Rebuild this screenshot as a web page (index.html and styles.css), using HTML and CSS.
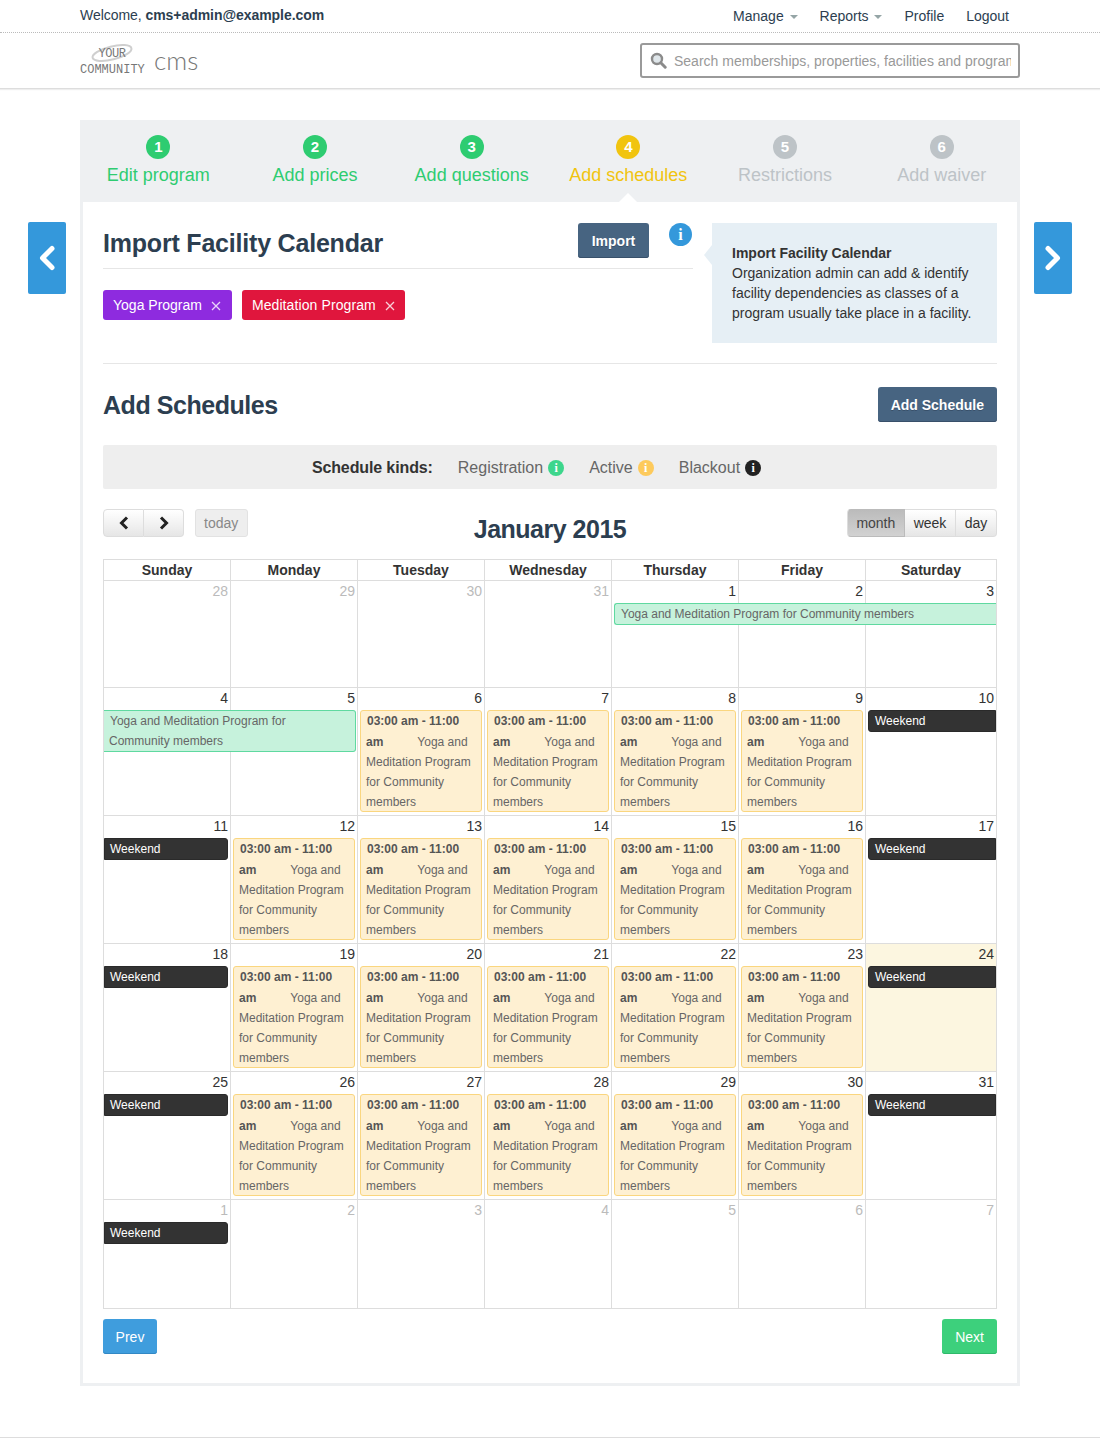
FILE: index.html
```html
<!DOCTYPE html>
<html>
<head>
<meta charset="utf-8">
<title>Add schedules</title>
<link rel="stylesheet" href="styles.css">
</head>
<body>
<div class="topbar">
	<div class="wrap topbar-in">
		<div class="welcome">Welcome, <b>cms+admin@example.com</b></div>
		<ul class="nav">
			<li>Manage <i class="caret"></i></li>
			<li>Reports <i class="caret"></i></li>
			<li>Profile</li>
			<li>Logout</li>
		</ul>
	</div>
</div>
<div class="header">
	<div class="wrap header-in">
		<div class="logo">
			<div class="logo-mark">
				<svg class="swoosh" width="44" height="20" viewBox="0 0 44 20"><ellipse cx="22" cy="10" rx="20" ry="6.500" transform="rotate(-14 22 10)" fill="none" stroke="#cfcfcf" stroke-width="2"/></svg>
				<span class="logo-your">YOUR</span>
				<span class="logo-comm">COMMUNITY</span>
			</div>
			<span class="logo-cms">cms</span>
		</div>
		<div class="search">
			<svg width="17" height="17" viewBox="0 0 17 17"><circle cx="7" cy="7" r="5" fill="#dfe6ea" stroke="#8b8b8b" stroke-width="2.4"/><path d="M10.8 10.8l4.4 4.4" stroke="#8b8b8b" stroke-width="3" stroke-linecap="round"/></svg>
			<input type="text" placeholder="Search memberships, properties, facilities and programs">
		</div>
	</div>
</div>

<div class="stage">
	<a class="side-btn"><svg width="18" height="26" viewBox="0 0 18 26"><path d="M14 3.5L4.500 13l9.500 9.500" fill="none" stroke="#fff" stroke-width="5" stroke-linecap="round" stroke-linejoin="round"/></svg></a>
	<div class="wizard">
		<div class="steps">
			<div class="step done"><span class="num">1</span><span class="label">Edit program</span></div>
			<div class="step done"><span class="num">2</span><span class="label">Add prices</span></div>
			<div class="step done"><span class="num">3</span><span class="label">Add questions</span></div>
			<div class="step current"><span class="num">4</span><span class="label">Add schedules</span></div>
			<div class="step"><span class="num">5</span><span class="label">Restrictions</span></div>
			<div class="step"><span class="num">6</span><span class="label">Add waiver</span></div>
		</div>
		<div class="card">
			<div class="import">
				<div class="import-main">
					<div class="import-head">
						<h2>Import Facility Calendar</h2>
						<a class="btn btn-dark btn-import">Import</a>
						<span class="info-big">i</span>
					</div>
					<div class="tags">
						<span class="tag tag-purple">Yoga Program <svg width="10" height="10" viewBox="0 0 10 10"><path d="M1 1l8 8M9 1l-8 8" stroke="#fff" stroke-opacity=".8" stroke-width="1.300"/></svg></span>
						<span class="tag tag-red">Meditation Program <svg width="10" height="10" viewBox="0 0 10 10"><path d="M1 1l8 8M9 1l-8 8" stroke="#fff" stroke-opacity=".8" stroke-width="1.300"/></svg></span>
					</div>
				</div>
				<div class="callout">
					<b>Import Facility Calendar</b><br>
					Organization admin can add &amp; identify facility dependencies as classes of a program usually take place in a facility.
				</div>
			</div>

			<div class="schedules-head">
				<h2>Add Schedules</h2>
				<a class="btn btn-dark">Add Schedule</a>
			</div>

			<div class="kinds">
				<b>Schedule kinds:</b>
				<span class="kind">Registration <i class="dot dot-green">i</i></span>
				<span class="kind">Active <i class="dot dot-yellow">i</i></span>
				<span class="kind">Blackout <i class="dot dot-black">i</i></span>
			</div>

			<div class="cal-bar">
				<div class="cal-left">
					<div class="btn-group">
						<a class="cal-btn arrow"><svg width="10" height="14" viewBox="0 0 10 14"><path d="M8 1.500L2.500 7 8 12.500" fill="none" stroke="#222" stroke-width="3"/></svg></a>
						<a class="cal-btn arrow"><svg width="10" height="14" viewBox="0 0 10 14"><path d="M2 1.500L7.500 7 2 12.500" fill="none" stroke="#222" stroke-width="3"/></svg></a>
					</div>
					<a class="cal-today">today</a>
				</div>
				<h2 class="cal-title">January 2015</h2>
				<div class="btn-group cal-views">
					<a class="cal-btn active">month</a>
					<a class="cal-btn">week</a>
					<a class="cal-btn">day</a>
				</div>
			</div>

			<div class="calendar">
				<div class="cal-head">
					<div>Sunday</div><div>Monday</div><div>Tuesday</div><div>Wednesday</div><div>Thursday</div><div>Friday</div><div>Saturday</div>
				</div>

				<div class="week">
					<div class="day other"><span class="date">28</span></div>
					<div class="day other"><span class="date">29</span></div>
					<div class="day other"><span class="date">30</span></div>
					<div class="day other"><span class="date">31</span></div>
					<div class="day"><span class="date">1</span></div>
					<div class="day"><span class="date">2</span></div>
					<div class="day"><span class="date">3</span></div>
					<div class="span-ev span-thu-sat">Yoga and Meditation Program for Community members</div>
				</div>

				<div class="week">
					<div class="day"><span class="date">4</span></div>
					<div class="day"><span class="date">5</span></div>
					<div class="day"><span class="date">6</span><div class="ev"><b>03:00 am - 11:00 am</b><span class="ev-name">Yoga and Meditation Program for Community members</span></div></div>
					<div class="day"><span class="date">7</span><div class="ev"><b>03:00 am - 11:00 am</b><span class="ev-name">Yoga and Meditation Program for Community members</span></div></div>
					<div class="day"><span class="date">8</span><div class="ev"><b>03:00 am - 11:00 am</b><span class="ev-name">Yoga and Meditation Program for Community members</span></div></div>
					<div class="day"><span class="date">9</span><div class="ev"><b>03:00 am - 11:00 am</b><span class="ev-name">Yoga and Meditation Program for Community members</span></div></div>
					<div class="day"><span class="date">10</span><div class="weekend">Weekend</div></div>
					<div class="span-ev span-sun-mon">Yoga and Meditation Program for<br>Community members</div>
				</div>

				<div class="week">
					<div class="day"><span class="date">11</span><div class="weekend">Weekend</div></div>
					<div class="day"><span class="date">12</span><div class="ev"><b>03:00 am - 11:00 am</b><span class="ev-name">Yoga and Meditation Program for Community members</span></div></div>
					<div class="day"><span class="date">13</span><div class="ev"><b>03:00 am - 11:00 am</b><span class="ev-name">Yoga and Meditation Program for Community members</span></div></div>
					<div class="day"><span class="date">14</span><div class="ev"><b>03:00 am - 11:00 am</b><span class="ev-name">Yoga and Meditation Program for Community members</span></div></div>
					<div class="day"><span class="date">15</span><div class="ev"><b>03:00 am - 11:00 am</b><span class="ev-name">Yoga and Meditation Program for Community members</span></div></div>
					<div class="day"><span class="date">16</span><div class="ev"><b>03:00 am - 11:00 am</b><span class="ev-name">Yoga and Meditation Program for Community members</span></div></div>
					<div class="day"><span class="date">17</span><div class="weekend">Weekend</div></div>
				</div>

				<div class="week">
					<div class="day"><span class="date">18</span><div class="weekend">Weekend</div></div>
					<div class="day"><span class="date">19</span><div class="ev"><b>03:00 am - 11:00 am</b><span class="ev-name">Yoga and Meditation Program for Community members</span></div></div>
					<div class="day"><span class="date">20</span><div class="ev"><b>03:00 am - 11:00 am</b><span class="ev-name">Yoga and Meditation Program for Community members</span></div></div>
					<div class="day"><span class="date">21</span><div class="ev"><b>03:00 am - 11:00 am</b><span class="ev-name">Yoga and Meditation Program for Community members</span></div></div>
					<div class="day"><span class="date">22</span><div class="ev"><b>03:00 am - 11:00 am</b><span class="ev-name">Yoga and Meditation Program for Community members</span></div></div>
					<div class="day"><span class="date">23</span><div class="ev"><b>03:00 am - 11:00 am</b><span class="ev-name">Yoga and Meditation Program for Community members</span></div></div>
					<div class="day today"><span class="date">24</span><div class="weekend">Weekend</div></div>
				</div>

				<div class="week">
					<div class="day"><span class="date">25</span><div class="weekend">Weekend</div></div>
					<div class="day"><span class="date">26</span><div class="ev"><b>03:00 am - 11:00 am</b><span class="ev-name">Yoga and Meditation Program for Community members</span></div></div>
					<div class="day"><span class="date">27</span><div class="ev"><b>03:00 am - 11:00 am</b><span class="ev-name">Yoga and Meditation Program for Community members</span></div></div>
					<div class="day"><span class="date">28</span><div class="ev"><b>03:00 am - 11:00 am</b><span class="ev-name">Yoga and Meditation Program for Community members</span></div></div>
					<div class="day"><span class="date">29</span><div class="ev"><b>03:00 am - 11:00 am</b><span class="ev-name">Yoga and Meditation Program for Community members</span></div></div>
					<div class="day"><span class="date">30</span><div class="ev"><b>03:00 am - 11:00 am</b><span class="ev-name">Yoga and Meditation Program for Community members</span></div></div>
					<div class="day"><span class="date">31</span><div class="weekend">Weekend</div></div>
				</div>

				<div class="week week-last">
					<div class="day other"><span class="date">1</span><div class="weekend">Weekend</div></div>
					<div class="day other"><span class="date">2</span></div>
					<div class="day other"><span class="date">3</span></div>
					<div class="day other"><span class="date">4</span></div>
					<div class="day other"><span class="date">5</span></div>
					<div class="day other"><span class="date">6</span></div>
					<div class="day other"><span class="date">7</span></div>
				</div>
			</div>

			<div class="pager">
				<a class="btn btn-blue">Prev</a>
				<a class="btn btn-green">Next</a>
			</div>
		</div>
	</div>
	<a class="side-btn"><svg width="18" height="26" viewBox="0 0 18 26"><path d="M4 3.500L13.500 13 4 22.500" fill="none" stroke="#fff" stroke-width="5" stroke-linecap="round" stroke-linejoin="round"/></svg></a>
</div>
<div class="footer"></div>
</body>
</html>
```
FILE: styles.css
```css
*{ margin:0; padding:0; box-sizing:border-box; list-style:none;}
body{ font-family:"Liberation Sans",Arial,sans-serif; font-size:14px; color:#2c3e50; background:#fff;}
.wrap{ width:940px; margin:0 auto;}

/* top */
.topbar{ height:33px; border-bottom:1px dotted #bbb;}
.topbar-in{ display:flex; justify-content:space-between; height:32px; align-items:center;}
.welcome{ margin-top:-3px; letter-spacing:-.05px;}
.nav{ display:flex; gap:22px; padding-right:11px; margin-top:-1px;}
.caret{ display:inline-block; width:0; height:0; margin-left:2px; vertical-align:2px; border:4px solid transparent; border-top-color:#95a5a6; border-bottom:0;}

.header{ height:56px; border-bottom:1px solid #ddd; box-shadow:0 1px 1px #eee;}
.header-in{ display:flex; justify-content:space-between; align-items:center; height:55px;}
.logo{ display:flex; align-items:center; gap:10px;}
.logo-mark{ position:relative; width:64px; height:34px; margin-top:2px; font-family:"Liberation Mono",monospace; color:#777; text-align:center;}
.swoosh{ position:absolute; left:10px; top:-2px;}
.logo-your{ position:relative; display:block; font-size:12px; line-height:14px; letter-spacing:-.4px; margin-top:2px;}
.logo-comm{ display:block; font-size:12px; line-height:18px; white-space:nowrap;}
.logo-cms{ font-family:Lato,"Liberation Sans",sans-serif; font-weight:300; font-size:26px; color:#777; margin-top:-2px;}
.search{ width:380px; height:35px; border:2px solid #9a9a9a; border-radius:3px; display:flex; align-items:center; padding:0 7px 0 8px; gap:7px;}
.search input{ flex:1; min-width:0; border:0; outline:0; font:14px "Liberation Sans",Arial,sans-serif; color:#555;}
.search input::placeholder{ color:#999; opacity:1;}

/* stage */
.stage{ display:flex; justify-content:center; gap:14px; padding-top:31px;}
.side-btn{ flex:none; width:38px; height:72px; margin-top:102px; background:#3498db; border-radius:2px; display:flex; align-items:center; justify-content:center;}
.wizard{ width:940px;}

.steps{ display:grid; grid-template-columns:repeat(6,1fr); height:82px; padding-top:15px; background:#eef0f2; text-align:center; font-size:18px; color:#bdc3c7;}
.step{ position:relative;}
.num{ display:block; width:24px; height:24px; margin:0 auto; border-radius:50%; background:#bdc3c7; color:#fff; font-size:15px; font-weight:bold; line-height:24px;}
.label{ display:block; margin-top:5px; line-height:22px;}
.done{ color:#2ecc71;}
.done .num{ background:#2ecc71;}
.current{ color:#f1c40f;}
.current .num{ background:#f1c40f;}
.current:after{ content:""; position:absolute; left:50%; bottom:0; margin-left:-9px; border:9px solid transparent; border-top:0; border-bottom-color:#fff; border-bottom-width:9px;}

.card{ border:3px solid #eef0f2; border-top:0; padding:21px 20px 29px;}
h2{ font-size:25px; line-height:30px; font-weight:bold; color:#2c3e50; letter-spacing:-.2px;}

.import{ display:flex; justify-content:space-between; padding-bottom:20px; border-bottom:1px solid #e6e6e6;}
.import-main{ width:590px;}
.import-head{ display:flex; height:46px; border-bottom:1px solid #e6e6e6; padding-top:0;}
.import-head h2{ flex:1; margin-top:5px;}
.info-big{ width:23px; height:23px; margin:0 1px 0 20px; border-radius:50%; background:#3498db; color:#fff; font:bold 16px/23px "Liberation Serif",serif; text-align:center;}
.btn{ display:inline-block; height:35px; padding:0 13px; border-radius:3px; font-size:14px; line-height:36px; font-weight:bold; color:#fff; text-align:center;}
.btn-import{ width:71px; padding:0;}
.btn-dark{ background:#476481; box-shadow:inset 0 -1px 0 #38506a; text-shadow:0 1px 0 #38506a;}
.btn-blue{ width:54px; padding:0; background:#3f9ddd; box-shadow:inset 0 -1px 0 #3288c4; font-weight:normal;}
.btn-green{ background:#3dd07c; box-shadow:inset 0 -1px 0 #2fb96a; font-weight:normal;}

.tags{ display:flex; gap:10px; margin-top:21px;}
.tag{ height:30px; padding:0 11px 0 10px; border-radius:3px; color:#fff; line-height:30px; white-space:nowrap;}
.tag svg{ margin-left:5px; vertical-align:-1px;}
.tag-purple{ background:#8e2bdf;}
.tag-red{ background:#e0163d; padding-right:10px; letter-spacing:.1px;}

.callout{ position:relative; width:285px; height:120px; padding:20px 18px 20px 20px; background:#e6eff5; color:#333; line-height:20px;}
.callout:before{ content:""; position:absolute; left:-8px; top:22px; border:10px solid transparent; border-left:0; border-right:8px solid #e6eff5;}

.schedules-head{ display:flex; justify-content:space-between; align-items:center; margin-top:23px;}
.schedules-head h2{ letter-spacing:-.45px;}
.kinds{ display:flex; justify-content:center; align-items:center; gap:25px; height:44px; margin-top:23px; padding-top:1px; background:#eee; border-radius:2px; font-size:16px; color:#333;}
.kinds b{ letter-spacing:-.12px;}
.kind{ display:flex; align-items:center; gap:5px; color:#666;}
.kind:last-child{ margin-right:27px;}
.dot{ display:block; width:16px; height:16px; border-radius:50%; color:#fff; font:bold 12px/16px "Liberation Serif",serif; text-align:center;}
.dot-green{ background:#3dd68c;}
.dot-yellow{ background:#fdca5c;}
.dot-black{ background:#222;}

.cal-bar{ display:grid; grid-template-columns:1fr auto 1fr; height:50px; margin-top:20px;}
.cal-left{ display:flex; gap:11px; align-items:flex-start;}
.btn-group{ display:flex;}
.cal-views{ justify-self:end; align-self:start;}
.cal-btn{ display:flex; align-items:center; justify-content:center; height:28px; padding:0 8.7px; border:1px solid #ddd; border-left:0; background:linear-gradient(#fff,#e6e6e6); color:#333; line-height:26px;}
.cal-btn:first-child{ border-left:1px solid #ddd; border-radius:4px 0 0 4px;}
.cal-btn:last-child{ border-radius:0 4px 4px 0;}
.arrow{ width:40px; padding:0;}
.arrow:first-child{ width:41px;}
.active{ background:linear-gradient(#bbb,#d2d2d2); border-color:#bbb; color:#444;}
.cal-today{ height:28px; padding:0 9px 0 8px; border:1px solid #e2e2e2; border-radius:3px; background:#eee; color:#888; line-height:26px;}
.cal-title{ margin-top:5px; letter-spacing:-.5px;}

/* calendar */
.calendar{ border:1px solid #ddd; color:#333;}
.cal-head{ display:grid; grid-template-columns:repeat(6,127px) 1fr; height:21px; border-bottom:1px solid #ddd; font-weight:bold; text-align:center; line-height:20px;}
.cal-head div{ border-right:1px solid #ddd;}
.cal-head div:last-child{ border-right:0;}
.week{ display:grid; grid-template-columns:repeat(6,127px) 1fr; grid-template-rows:22px auto; min-height:107px; border-bottom:1px solid #ddd;}
.week-last{ min-height:108px; border-bottom:0;}
.day{ grid-row:1 / 3; border-right:1px solid #ddd; min-width:0;}
.day:nth-child(1){ grid-column:1;}
.day:nth-child(2){ grid-column:2;}
.day:nth-child(3){ grid-column:3;}
.day:nth-child(4){ grid-column:4;}
.day:nth-child(5){ grid-column:5;}
.day:nth-child(6){ grid-column:6;}
.day:nth-child(7){ grid-column:7; border-right:0;}
.date{ display:block; height:22px; padding-right:2px; text-align:right; line-height:21px;}
.other .date{ color:#bbb;}
.today{ background:#fcf6e0;}

.ev{ margin:0 2px 3px; padding:0 5px; height:102px; border:1px solid #fad67f; border-radius:3px; background:#fef0d2; color:#666; font-size:12px; line-height:20px; text-indent:1px;}
.ev::first-line{ line-height:21px;}
.ev b{ color:#555;}
.ev-name{ margin-left:34px;}
.weekend{ height:22px; margin:0 2px; padding:0 5px; border:1px solid #2a2a2a; border-radius:3px; background:#333; color:#fff; font-size:12px; line-height:20px;}
.day:nth-child(1) .weekend{ margin-left:0; border-radius:0 3px 3px 0;}
.day:nth-child(7) .weekend{ margin-right:0; padding-left:6px; border-radius:3px 0 0 3px;}
.span-ev{ grid-row:2; align-self:start; padding:0 5px; border:1px solid #5fd9a0; background:#c6f2dc; color:#666; font-size:12px; line-height:20px; text-indent:1px;}
.span-thu-sat{ grid-column:5 / 8; margin-left:2px; padding-left:5px; border-right:0; border-radius:3px 0 0 3px;}
.span-sun-mon{ grid-column:1 / 3; margin-right:2px; border-left:0; border-radius:0 3px 3px 0;}

.pager{ display:flex; justify-content:space-between; margin-top:10px;}
.footer{ height:12px; margin-top:51px; border-top:1px solid #ddd;}
```
